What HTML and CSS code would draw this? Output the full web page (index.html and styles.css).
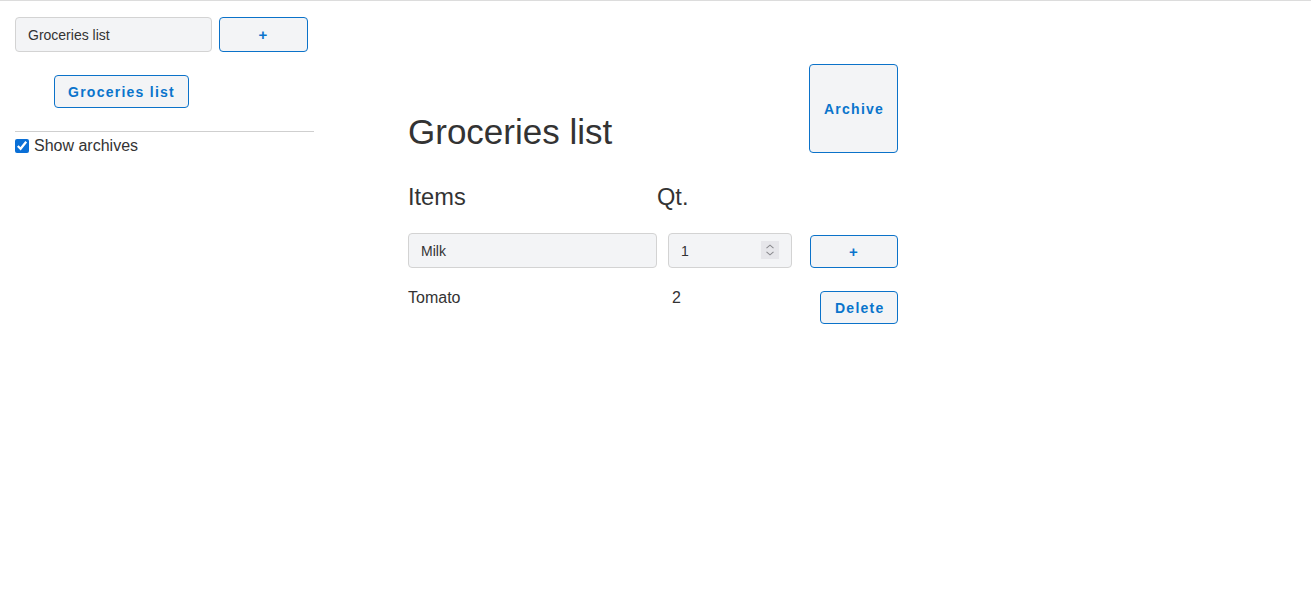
FILE: index.html
```html
<!DOCTYPE html>
<html lang="en">
<head>
<meta charset="utf-8">
<title>Groceries list</title>
<link rel="stylesheet" href="styles.css">
</head>
<body>
<div class="app">
  <aside class="sidebar">
    <form class="new-list">
      <input class="field list-name" type="text" value="Groceries list">
      <button class="btn btn-add" type="button">+</button>
    </form>
    <ul class="lists">
      <li><button class="btn btn-list" type="button">Groceries list</button></li>
    </ul>
    <hr class="divider">
    <label class="archives"><input class="check" type="checkbox" checked>Show archives</label>
  </aside>
  <main class="main">
    <header class="list-header">
      <h1 class="title">Groceries list</h1>
      <button class="btn btn-archive" type="button">Archive</button>
    </header>
    <div class="grid heads">
      <h3 class="head">Items</h3>
      <h3 class="head">Qt.</h3>
      <span></span>
    </div>
    <div class="grid row-new">
      <input class="field item-name" type="text" value="Milk">
      <div class="qty-wrap">
        <input class="field qty" type="text" value="1">
        <span class="spinner">
          <svg width="18" height="18" viewBox="0 0 18 18" aria-hidden="true">
            <path d="M5.5 7.2 L9 4.2 L12.5 7.2" fill="none" stroke="#8a8a8e" stroke-width="1.1"/>
            <path d="M5.5 10.8 L9 13.8 L12.5 10.8" fill="none" stroke="#8a8a8e" stroke-width="1.1"/>
          </svg>
        </span>
      </div>
      <button class="btn btn-plus" type="button">+</button>
    </div>
    <div class="grid row-item">
      <span class="item-text">Tomato</span>
      <span class="item-text qty-val">2</span>
      <button class="btn btn-delete" type="button">Delete</button>
    </div>
  </main>
</div>
</body>
</html>
```
FILE: styles.css
```css
html, body {
  margin: 0;
  padding: 0;
  background: #ffffff;
}
body {
  border-top: 1px solid #dcdcdc;
  font-family: "Liberation Sans", Arial, sans-serif;
  color: #333333;
}
.app {
  display: flex;
  align-items: flex-start;
}
.sidebar {
  width: 299px;
  padding: 16px 0 0 15px;
}
.new-list {
  display: flex;
  gap: 7px;
  margin: 0;
}
.field {
  box-sizing: border-box;
  height: 35px;
  border: 1px solid #d3d3d3;
  border-radius: 4px;
  background: #f3f4f6;
  font-family: "Liberation Sans", Arial, sans-serif;
  font-size: 14px;
  color: #333333;
  padding: 0 12px;
  margin: 0;
  outline: none;
}
.list-name {
  width: 197px;
}
.btn {
  box-sizing: border-box;
  border: 1px solid #0b72c9;
  border-radius: 4px;
  background: #f3f4f6;
  color: #0a74cc;
  font-family: "Liberation Sans", Arial, sans-serif;
  font-weight: bold;
  font-size: 14px;
  letter-spacing: 1.25px;
  white-space: nowrap;
  margin: 0;
  padding: 0 14px;
  cursor: pointer;
}
.btn-add {
  width: 89px;
  height: 35px;
  font-size: 15px;
}
.lists {
  list-style: none;
  margin: 23px 0 0;
  padding: 0 0 0 39px;
}
.btn-list {
  height: 33px;
  width: 135px;
  padding: 0;
}
.divider {
  border: 0;
  border-top: 1px solid #cfcfcf;
  margin: 23px 0 4px;
  height: 0;
}
.archives {
  display: flex;
  align-items: center;
  font-size: 16px;
  line-height: 20px;
  color: #333333;
}
.check {
  width: 14px;
  height: 14px;
  margin: 0 5px 0 0;
  accent-color: #0a6fd6;
}
.main {
  margin-left: 94px;
  width: 490px;
  padding-top: 63px;
}
.list-header {
  display: flex;
  justify-content: space-between;
  align-items: flex-end;
}
.title {
  margin: 0 0 2px;
  font-size: 35px;
  font-weight: normal;
  line-height: 39px;
  color: #333333;
}
.btn-archive {
  width: 89px;
  height: 89px;
}
.grid {
  display: grid;
  grid-template-columns: 249px 153px 88px;
}
.heads {
  margin-top: 31px;
}
.head {
  margin: 0;
  font-size: 23.6px;
  font-weight: normal;
  line-height: 26px;
  color: #333333;
}
.row-new {
  margin-top: 23px;
  align-items: end;
}
.item-name {
  width: 249px;
}
.qty-wrap {
  position: relative;
  margin-left: 11px;
  width: 124px;
  height: 35px;
}
.qty {
  width: 124px;
}
.spinner {
  position: absolute;
  left: 93px;
  top: 8px;
  width: 18px;
  height: 18px;
  background: #e6e6ea;
  display: flex;
}
.btn-plus {
  width: 88px;
  height: 33px;
  font-size: 15px;
}
.row-item {
  margin-top: 21px;
  align-items: start;
}
.item-text {
  font-size: 16px;
  line-height: 18px;
  color: #333333;
}
.qty-val {
  padding-left: 15px;
}
.btn-delete {
  justify-self: end;
  margin-top: 2px;
  height: 33px;
  width: 78px;
}
```
